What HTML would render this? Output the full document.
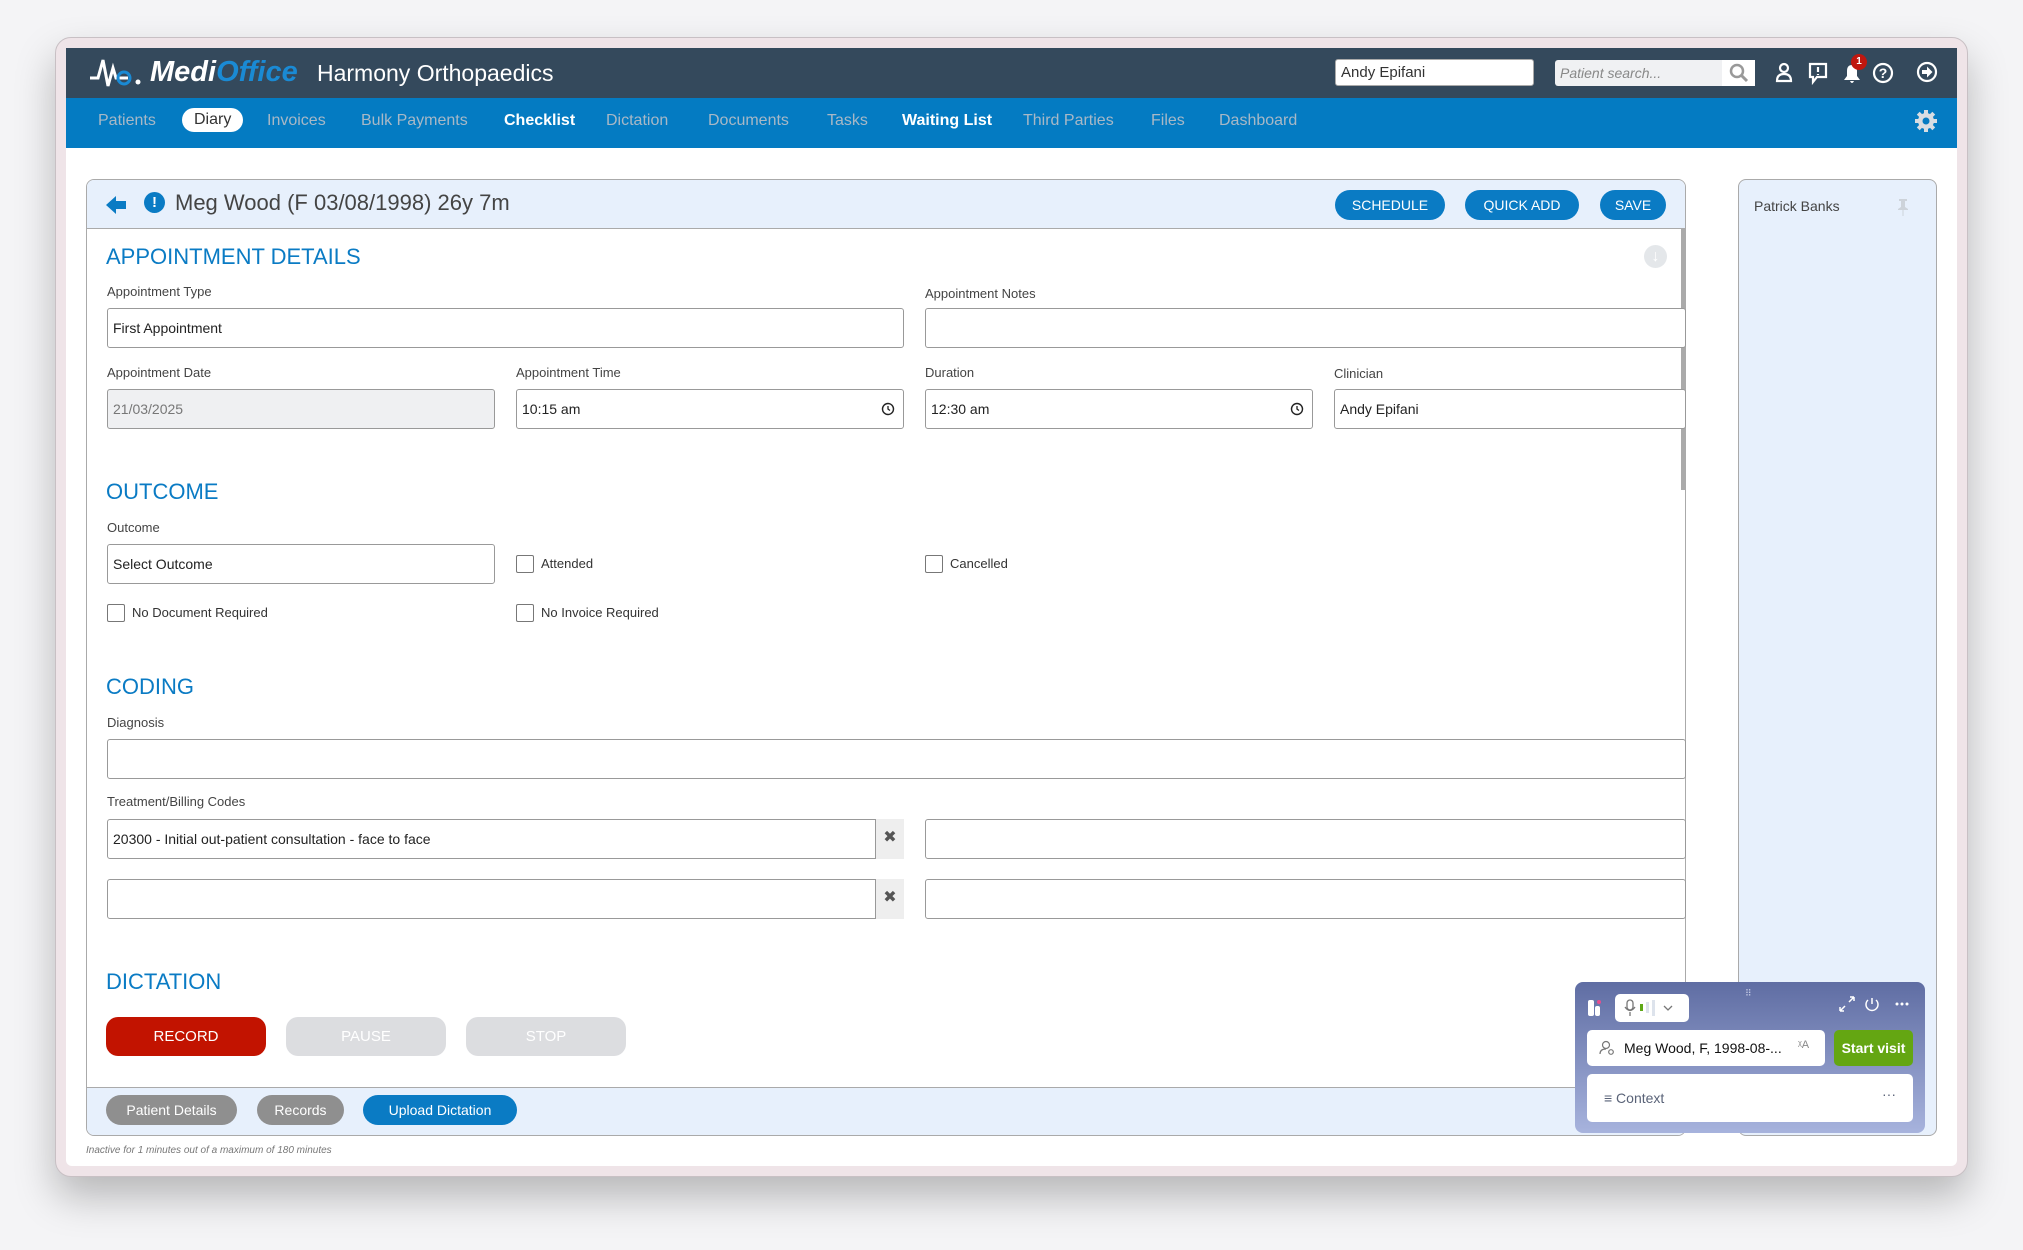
<!DOCTYPE html>
<html><head><meta charset="utf-8"><style>
*{box-sizing:border-box;margin:0;padding:0}
body{width:2023px;height:1250px;background:#f4f4f6;font-family:"Liberation Sans",sans-serif;position:relative;overflow:hidden;color:#333}
.abs{position:absolute}
.win{left:55px;top:37px;width:1913px;height:1140px;background:#efe4e8;border-radius:16px;box-shadow:0 20px 40px rgba(0,0,0,.25);border:1px solid #c8c0c4}
.app{left:66px;top:48px;width:1891px;height:1118px;background:#fff;border-radius:6px;overflow:hidden}
.top{left:66px;top:48px;width:1891px;height:50px;background:#34495c}
.nav{left:66px;top:98px;width:1891px;height:50px;background:#047bc2}
.nav span{position:absolute;top:14px;font-size:16px;color:#a8b8c6}
.nav span.w{color:#fff;font-weight:bold}
.in{position:absolute;border:1px solid #999;border-radius:3px;background:#fff;height:40px;font-size:14px;padding:11px 5px;color:#222}
.lbl{position:absolute;font-size:13px;color:#444}
.sec{position:absolute;font-size:22px;color:#0a7bc4;left:106px}
.cb{position:absolute;width:18px;height:18px;border:1px solid #777;border-radius:2px;background:#fff}
.cbt{position:absolute;font-size:13px;color:#333}
.pill{position:absolute;border-radius:16px;color:#fff;font-size:14px;text-align:center;line-height:30px}
.xb{position:absolute;width:29px;height:40px;border-left:1px solid #999;background:#eee;text-align:center;line-height:38px;font-size:16px;color:#555}
</style></head><body>
<div class="abs win"></div>
<div class="abs app"></div>
<div class="abs top"></div>
<!-- logo -->
<svg class="abs" style="left:88px;top:56px" width="56" height="34" viewBox="0 0 56 34"><path d="M2 22 H10 L15 4 L20 30 L25 12 L28 22 H40" stroke="#fff" stroke-width="3" fill="none"/><circle cx="36" cy="22" r="6" stroke="#1a8ad4" stroke-width="3" fill="none"/><circle cx="50" cy="26" r="2.5" fill="#fff"/></svg>
<div class="abs" style="left:150px;top:56px;font-size:29px;font-style:italic;font-weight:bold;color:#fff">Medi<span style="color:#1a8ad4">Office</span></div>
<div class="abs" style="left:317px;top:60px;font-size:23px;color:#fff">Harmony Orthopaedics</div>
<div class="abs" style="left:1335px;top:59px;width:199px;height:27px;background:#fff;border-radius:3px;border:1px solid #aaa;font-size:15px;padding:4px 5px">Andy Epifani</div>
<div class="abs" style="left:1555px;top:60px;width:200px;height:26px;background:#f0f1f3;border-radius:3px;font-size:14px;font-style:italic;color:#888;padding:5px 5px">Patient search...</div>
<div class="abs" style="left:1722px;top:60px;width:33px;height:26px;background:#fff"></div>
<svg class="abs" style="left:1729px;top:63px" width="20" height="20" viewBox="0 0 20 20"><circle cx="8" cy="8" r="6" stroke="#999" stroke-width="2.5" fill="none"/><path d="M12 12 L18 18" stroke="#999" stroke-width="3"/></svg>
<svg class="abs" style="left:1774px;top:61px" width="130" height="24" viewBox="0 0 130 24"><g stroke="#fff" stroke-width="2.2" fill="none"><circle cx="10" cy="7" r="4"/><path d="M3 20 Q3 13 10 13 Q17 13 17 20 Z"/><path d="M36 3 H52 V16 H43 L39 21 V16 H36 Z"/><path d="M44 6 V11 M44 13 V14"/><circle cx="109" cy="12" r="9"/></g><path d="M70 19 H86 L83 15 V10 Q83 4 78 4 Q73 4 73 10 V15 Z M76 20 Q78 24 80 20" fill="#fff"/><text x="109" y="17" font-size="14" font-weight="bold" fill="#fff" text-anchor="middle" font-family="Liberation Sans">?</text></svg>
<div class="abs" style="left:1851px;top:54px;width:16px;height:16px;border-radius:50%;background:#c0170f;color:#fff;font-size:10px;text-align:center;line-height:16px;font-weight:bold">1</div>
<svg class="abs" style="left:1916px;top:61px" width="22" height="22" viewBox="0 0 22 22"><circle cx="11" cy="11" r="9" stroke="#fff" stroke-width="2.2" fill="none"/><path d="M6 9 H11 V5.5 L16.5 11 L11 16.5 V13 H6 Z" fill="#fff"/></svg>
<div class="abs nav">
<span style="left:32px">Patients</span>
<span style="left:116px;top:10px;background:#fff;color:#333;border-radius:14px;padding:3px 12px;font-size:16px">Diary</span>
<span style="left:201px">Invoices</span>
<span style="left:295px">Bulk Payments</span>
<span class="w" style="left:438px">Checklist</span>
<span style="left:540px">Dictation</span>
<span style="left:642px">Documents</span>
<span style="left:761px">Tasks</span>
<span class="w" style="left:836px">Waiting List</span>
<span style="left:957px">Third Parties</span>
<span style="left:1085px">Files</span>
<span style="left:1153px">Dashboard</span>
</div>
<svg class="abs" style="left:1914px;top:109px" width="24" height="24" viewBox="0 0 24 24"><g fill="#d8dde2"><circle cx="12" cy="12" r="8"/><rect x="10" y="1" width="4" height="22"/><rect x="1" y="10" width="22" height="4"/><rect x="10" y="1" width="4" height="22" transform="rotate(45 12 12)"/><rect x="10" y="1" width="4" height="22" transform="rotate(-45 12 12)"/></g><circle cx="12" cy="12" r="3.5" fill="#047bc2"/></svg>

<!-- main panel -->
<div class="abs" style="left:86px;top:179px;width:1600px;height:957px;border:1px solid #aaa;border-radius:8px;overflow:hidden;background:#fff">
 <div class="abs" style="left:0;top:0;width:1600px;height:49px;background:#e7f0fc;border-bottom:1px solid #aaa"></div>
 <div class="abs" style="left:0;top:907px;width:1600px;height:50px;background:#e7f0fc;border-top:1px solid #aaa"></div>
</div>
<div class="abs" style="left:1681px;top:229px;width:5px;height:261px;background:#aaa"></div>
<svg class="abs" style="left:104px;top:194px" width="24" height="22" viewBox="0 0 24 22"><path d="M2 11 L12 2 V7 H22 V15 H12 V20 Z" fill="#0a7bc4"/></svg>
<div class="abs" style="left:144px;top:192px;width:21px;height:21px;border-radius:50%;background:#0a7bc4;color:#fff;font-weight:bold;font-size:15px;text-align:center;line-height:21px">!</div>
<div class="abs" style="left:175px;top:190px;font-size:22px;color:#444">Meg Wood (F 03/08/1998) 26y 7m</div>
<div class="pill" style="left:1335px;top:190px;width:110px;background:#0a7bc4">SCHEDULE</div>
<div class="pill" style="left:1465px;top:190px;width:114px;background:#0a7bc4">QUICK ADD</div>
<div class="pill" style="left:1600px;top:190px;width:66px;background:#0a7bc4">SAVE</div>

<div class="sec" style="top:244px">APPOINTMENT DETAILS</div>
<div class="abs" style="left:1644px;top:245px;width:23px;height:23px;border-radius:50%;background:#e4e7ea;color:#fff;text-align:center;font-size:16px;line-height:23px;font-weight:bold">↓</div>
<div class="lbl" style="left:107px;top:284px">Appointment Type</div>
<div class="in" style="left:107px;top:308px;width:797px">First Appointment</div>
<div class="lbl" style="left:925px;top:286px">Appointment Notes</div>
<div class="in" style="left:925px;top:308px;width:761px"></div>
<div class="lbl" style="left:107px;top:365px">Appointment Date</div>
<div class="in" style="left:107px;top:389px;width:388px;background:#eff0f2;color:#777">21/03/2025</div>
<div class="lbl" style="left:516px;top:365px">Appointment Time</div>
<div class="in" style="left:516px;top:389px;width:388px">10:15 am</div>
<div class="lbl" style="left:925px;top:365px">Duration</div>
<div class="in" style="left:925px;top:389px;width:388px">12:30 am</div>
<div class="lbl" style="left:1334px;top:366px">Clinician</div>
<div class="in" style="left:1334px;top:389px;width:352px">Andy Epifani</div>
<svg class="abs" style="left:881px;top:402px" width="14" height="14" viewBox="0 0 14 14"><circle cx="7" cy="7" r="5.5" stroke="#222" stroke-width="1.4" fill="none"/><path d="M7 4 V7 L9 8.5" stroke="#222" stroke-width="1.3" fill="none"/></svg>
<svg class="abs" style="left:1290px;top:402px" width="14" height="14" viewBox="0 0 14 14"><circle cx="7" cy="7" r="5.5" stroke="#222" stroke-width="1.4" fill="none"/><path d="M7 4 V7 L9 8.5" stroke="#222" stroke-width="1.3" fill="none"/></svg>

<div class="sec" style="top:479px">OUTCOME</div>
<div class="lbl" style="left:107px;top:520px">Outcome</div>
<div class="in" style="left:107px;top:544px;width:388px">Select Outcome</div>
<div class="cb" style="left:516px;top:555px"></div><div class="cbt" style="left:541px;top:556px">Attended</div>
<div class="cb" style="left:925px;top:555px"></div><div class="cbt" style="left:950px;top:556px">Cancelled</div>
<div class="cb" style="left:107px;top:604px"></div><div class="cbt" style="left:132px;top:605px">No Document Required</div>
<div class="cb" style="left:516px;top:604px"></div><div class="cbt" style="left:541px;top:605px">No Invoice Required</div>

<div class="sec" style="top:674px">CODING</div>
<div class="lbl" style="left:107px;top:715px">Diagnosis</div>
<div class="in" style="left:107px;top:739px;width:1579px"></div>
<div class="lbl" style="left:107px;top:794px">Treatment/Billing Codes</div>
<div class="in" style="left:107px;top:819px;width:797px">20300 - Initial out-patient consultation - face to face</div>
<div class="xb" style="left:875px;top:819px">✖</div>
<div class="in" style="left:925px;top:819px;width:761px"></div>
<div class="in" style="left:107px;top:879px;width:797px"></div>
<div class="xb" style="left:875px;top:879px">✖</div>
<div class="in" style="left:925px;top:879px;width:761px"></div>

<div class="sec" style="top:969px">DICTATION</div>
<div class="abs" style="left:106px;top:1017px;width:160px;height:39px;border-radius:12px;background:#c21300;color:#fff;font-size:15px;text-align:center;line-height:39px">RECORD</div>
<div class="abs" style="left:286px;top:1017px;width:160px;height:39px;border-radius:12px;background:#dcdde0;color:#fff;font-size:15px;text-align:center;line-height:39px">PAUSE</div>
<div class="abs" style="left:466px;top:1017px;width:160px;height:39px;border-radius:12px;background:#dcdde0;color:#fff;font-size:15px;text-align:center;line-height:39px">STOP</div>
<div class="pill" style="left:106px;top:1095px;width:131px;background:#8f8f8f;line-height:30px">Patient Details</div>
<div class="pill" style="left:257px;top:1095px;width:87px;background:#8f8f8f">Records</div>
<div class="pill" style="left:363px;top:1095px;width:154px;background:#0a7bc4">Upload Dictation</div>
<div class="abs" style="left:86px;top:1145px;font-size:10px;font-style:italic;color:#777">Inactive for 1 minutes out of a maximum of 180 minutes</div>

<!-- right panel -->
<div class="abs" style="left:1738px;top:179px;width:199px;height:957px;border:1px solid #aaa;border-radius:8px;background:#e7f0fc"></div>
<div class="abs" style="left:1754px;top:198px;font-size:14px;color:#444">Patrick Banks</div>
<svg class="abs" style="left:1897px;top:198px" width="12" height="18" viewBox="0 0 12 18"><path d="M2 1 H10 V3 H8 V9 L11 11 V12 H1 V11 L4 9 V3 H2 Z M5.5 12 H6.5 V18 H5.5 Z" fill="#cdd3da"/></svg>

<!-- widget -->
<div class="abs" style="left:1575px;top:982px;width:350px;height:151px;border-radius:8px;background:linear-gradient(180deg,#5f6da3,#a7b3dd)"></div>
<div class="abs" style="left:1745px;top:988px;font-size:9px;color:#c5cbe5;letter-spacing:1px">⠿</div>
<div class="abs" style="left:1588px;top:1000px;width:6px;height:16px;background:#fff;border-radius:2px"></div>
<div class="abs" style="left:1595px;top:1006px;width:5px;height:10px;background:#fff;border-radius:2px"></div>
<div class="abs" style="left:1597px;top:1000px;width:4px;height:4px;background:#e94d8e;border-radius:50%"></div>
<div class="abs" style="left:1615px;top:994px;width:74px;height:28px;background:#fff;border-radius:5px"></div>
<svg class="abs" style="left:1622px;top:999px" width="64" height="18" viewBox="0 0 64 18"><rect x="5" y="1" width="6" height="10" rx="3" stroke="#777" stroke-width="1.3" fill="none"/><path d="M3 8 Q8 15 13 8 M8 13 V17" stroke="#777" stroke-width="1.3" fill="none"/><rect x="18" y="5" width="3" height="7" fill="#5ea817"/><rect x="24" y="3" width="3" height="11" fill="#dde3ec"/><rect x="30" y="1" width="3" height="16" fill="#dde3ec"/><path d="M42 7 L46 11 L50 7" stroke="#777" stroke-width="1.3" fill="none"/></svg>
<svg class="abs" style="left:1838px;top:995px" width="80" height="18" viewBox="0 0 80 18"><g stroke="#fff" stroke-width="1.5" fill="none"><path d="M2 16 L7 11 M2 16 V12 M2 16 H6 M16 2 L11 7 M16 2 V6 M16 2 H12"/><path d="M34 3 V9 M30 5 A6 6 0 1 0 38 5"/></g><g fill="#fff"><circle cx="59" cy="9" r="1.5"/><circle cx="64" cy="9" r="1.5"/><circle cx="69" cy="9" r="1.5"/></g></svg>
<div class="abs" style="left:1587px;top:1030px;width:238px;height:36px;background:#fff;border-radius:5px"></div>
<svg class="abs" style="left:1599px;top:1039px" width="18" height="18" viewBox="0 0 18 18"><circle cx="7" cy="6" r="3.5" stroke="#777" stroke-width="1.2" fill="none"/><path d="M1 15 Q1 10 7 10" stroke="#777" stroke-width="1.2" fill="none"/><circle cx="12" cy="13" r="2.3" stroke="#777" stroke-width="1.2" fill="none"/></svg>
<div class="abs" style="left:1624px;top:1040px;font-size:14px;color:#111">Meg Wood, F, 1998-08-...</div>
<div class="abs" style="left:1798px;top:1039px;font-size:11px;color:#888">ᵡA</div>
<div class="abs" style="left:1834px;top:1030px;width:79px;height:36px;background:#64a612;border-radius:5px;color:#fff;font-size:14px;font-weight:bold;text-align:center;line-height:36px">Start visit</div>
<div class="abs" style="left:1587px;top:1074px;width:326px;height:48px;background:#fff;border-radius:5px"></div>
<div class="abs" style="left:1604px;top:1090px;font-size:14px;color:#5a6378">≡ Context</div>
<div class="abs" style="left:1882px;top:1086px;font-size:14px;color:#5a6378">···</div>
</body></html>
